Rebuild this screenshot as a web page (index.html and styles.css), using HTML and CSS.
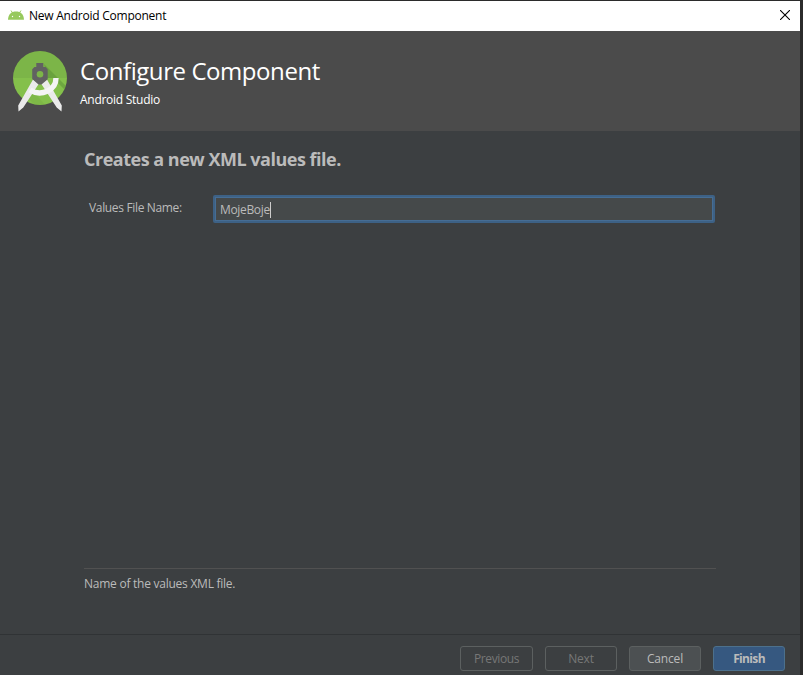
FILE: index.html
```html
<!DOCTYPE html>
<html lang="en">
<head>
<meta charset="utf-8">
<title>New Android Component</title>
<link rel="stylesheet" href="styles.css">
</head>
<body>
<div class="window">
  <div class="titlebar">
    <svg class="droid" width="16" height="10" viewBox="0 0 16 10">
      <path d="M3 .5 4.7 3M13 .5 11.3 3" stroke="#97c95c" stroke-width="1"/>
      <path d="M0 9.7C.3 4 3.5 1.500 8 1.500s7.700 2.500 8 8.200z" fill="#97c95c"/>
      <circle cx="4.500" cy="6.500" r=".7" fill="#fff"/><circle cx="11.500" cy="6.500" r=".7" fill="#fff"/>
    </svg>
    <span class="window-title">New Android Component</span>
    <svg class="close" width="10" height="10" viewBox="0 0 10 10"><path d="M0 0l10 10M10 0L0 10" stroke="#000" stroke-width="1.100"/></svg>
  </div>
  <header class="header">
    <svg class="logo" width="54" height="61" viewBox="0 0 54 61">
      <defs><clipPath id="disc"><circle cx="27" cy="27" r="27"/></clipPath></defs>
      <g clip-path="url(#disc)">
        <path d="M0 0h54v27H0z" fill="#7cb548"/>
        <path d="M0 27h54v27H0z" fill="#84c04b"/>
        <path d="M31 13 54 36v5L45 32V27H34z" fill="#5f9638" opacity=".6"/>
        <path d="M20 40 32 54H22L14 46z" fill="#75ac40" opacity=".4"/>
      </g>
      <path d="M20 28.500 26 32.500 10.300 56.500 5.500 60.500 5.200 54.500zM34 28.500 28 32.500 43.700 56.500 48.500 60.500 48.800 54.500z" fill="#eaeaea"/>
      <path d="M17 39C28 46 43 39.500 43 27" fill="none" stroke="#f4f4f4" stroke-width="5.400"/>
      <path d="M23.300 12h7v4h2.200l2.200 2.200v10L28.500 33.500h-3L19.200 28V18.200l2.200-2.200h1.900z" fill="#616161"/>
      <circle cx="27" cy="23.300" r="3.300" fill="#7cb548"/>
    </svg>
    <div class="heading">
      <h1>Configure Component</h1>
      <p>Android Studio</p>
    </div>
  </header>
  <main class="content">
    <h2>Creates a new XML values file.</h2>
    <div class="field">
      <label>Values File Name:</label>
      <div class="input"><span class="value">MojeBoje</span><i class="caret"></i></div>
    </div>
    <p class="description"><span>Name of the values XML file.</span></p>
  </main>
  <footer class="footer">
    <button class="w73" disabled><span class="previous">Previous</span></button>
    <button disabled><span class="next">Next</span></button>
    <button class="cancel"><span>Cancel</span></button>
    <button class="finish"><span>Finish</span></button>
  </footer>
</div>
</body>
</html>
```
FILE: styles.css
```css
* { box-sizing: border-box; }
body { margin: 0; background: #2b2b2b; overflow: hidden; font: 12px/16px "Open Sans", "Noto Sans", sans-serif; color: #bbb; }
h1, h2, p { margin: 0; }
svg { display: block; flex: none; }
span, label, h1, h2 { white-space: nowrap; }
.window { width: 800px; height: 674px; margin-top: 1px; display: flex; flex-direction: column; background: #3c3f41; }
.titlebar { height: 30px; background: #fff; color: #000; display: flex; align-items: center; padding: 0 10px 0 8px; }
.droid { margin-bottom: 2px; }
.window-title { margin-left: 5px; letter-spacing: -.24px; }
.close { margin: 0 0 2px auto; }
.header { height: 100px; background: #4b4b4b; color: #fff; display: flex; padding: 20px 13px; }
.heading { margin-left: 13px; }
h1 { font-size: 24px; font-weight: 400; line-height: 32px; margin-top: 4px; letter-spacing: -.43px; }
.heading p { margin-top: 5px; letter-spacing: -.27px; }
.content { flex: 1; display: flex; flex-direction: column; padding: 16px 84px 0; }
h2 { font-size: 18px; line-height: 24px; font-weight: 700; letter-spacing: -.49px; }
.field { display: flex; padding-left: 5px; margin-top: 24px; }
label { width: 124px; padding-top: 5px; letter-spacing: -.34px; }
.input { width: 502px; height: 28px; border: 2px solid #3d6185; border-radius: 2px; box-shadow: inset 0 0 0 1px #466d94; background: #45494a; display: flex; align-items: center; padding: 1px 5px 0; }
.value { letter-spacing: -.34px; }
.caret { width: 1px; height: 16px; background: #ccc; }
.description { margin: auto 0 42px; width: 632px; border-top: 1px solid #515151; padding-top: 7px; letter-spacing: -.25px; }
.footer { height: 41px; border-top: 1px solid #303335; display: flex; justify-content: flex-end; gap: 12px; padding: 11px 15px 0 0; }
button { width: 72px; height: 25px; padding: 0; border: 1px solid #5c6060; border-radius: 3px; background: none; color: #777; font: inherit; letter-spacing: -.15px; }
.w73 { width: 73px; }
.previous { letter-spacing: -.37px; }
.cancel { background: #4c5052; color: #bbb; }
.finish { background: #365880; border-color: #4c708c; color: #bbb; font-weight: 700; letter-spacing: -.65px; }
```
